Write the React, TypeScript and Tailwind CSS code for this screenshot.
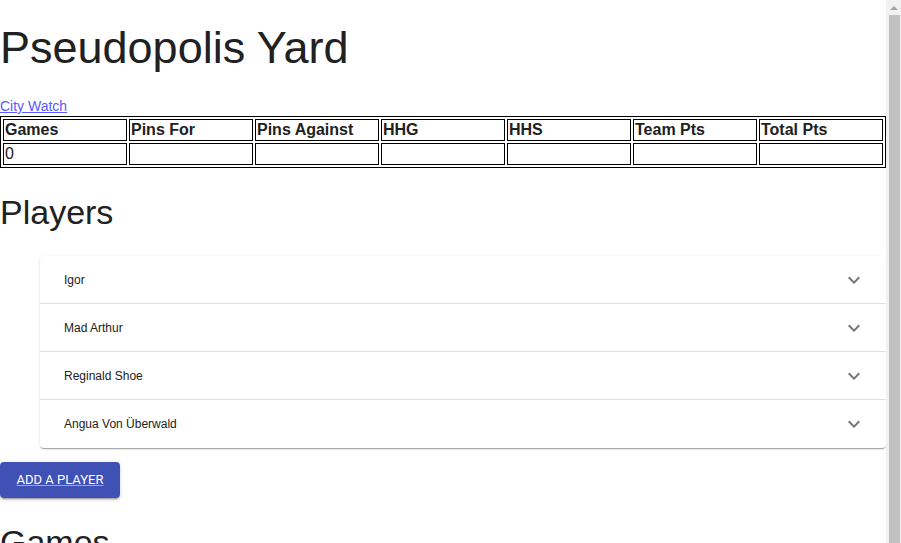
import React from "react";

const columns = ["Games", "Pins For", "Pins Against", "HHG", "HHS", "Team Pts", "Total Pts"];
const values = ["0", "", "", "", "", "", ""];
const players = ["Igor", "Mad Arthur", "Reginald Shoe", "Angua Von Überwald"];

const ExpandMore = () => (
  <svg viewBox="0 0 24 24" width="24" height="24" className="fill-[rgba(0,0,0,0.54)]">
    <path d="M16.59 8.59L12 13.17 7.41 8.59 6 10l6 6 6-6z" />
  </svg>
);

// static stand-in for the browser's vertical scrollbar
const Scrollbar = () => (
  <div className="flex w-[15px] shrink-0 flex-col items-center bg-[#f1f1f1]">
    <div className="flex h-[15px] w-full items-center justify-center">
      <div className="h-0 w-0 border-x-[4px] border-b-[4px] border-x-transparent border-b-[#a3a3a3]" />
    </div>
    <div className="w-[11px] flex-1 bg-[#c1c1c1] ml-[1px]" />
  </div>
);

const App = () => {
  return (
    <div className="flex h-[543px] overflow-hidden bg-white text-[#212121] font-['Liberation_Sans',Arial,sans-serif]">
      <div className="min-w-0 flex-1">
        <h1 className="mt-[22px] text-[45px] leading-[52px] font-normal">Pseudopolis Yard</h1>

        <div className="mt-[24px] text-[14px] leading-[16px]">
          <a href="#" className="text-[#5a5aff] underline">
            City Watch
          </a>
        </div>

        <table className="mt-[2px] w-full table-fixed border border-black border-separate border-spacing-[2px]">
          <thead>
            <tr>
              {columns.map((c) => (
                <th key={c} className="border border-black p-px text-left text-[16px] leading-[18px] font-bold">
                  {c}
                </th>
              ))}
            </tr>
          </thead>
          <tbody>
            <tr>
              {values.map((v, i) => (
                <td key={i} className="border border-black p-px text-[16px] leading-[18px] h-[22px]">
                  {v}
                </td>
              ))}
            </tr>
          </tbody>
        </table>

        <h2 className="mt-[24px] text-[34px] leading-[40px] font-normal">Players</h2>

        <div className="mt-[24px] ml-10 bg-white rounded-[4px] shadow-[0px_2px_1px_-1px_rgba(0,0,0,0.2),0px_1px_1px_0px_rgba(0,0,0,0.14),0px_1px_3px_0px_rgba(0,0,0,0.12)]">
          {players.map((p, i) => (
            <div
              key={p}
              className={`flex h-12 items-center justify-between pl-6 pr-5 ${i < players.length - 1 ? "border-b border-[rgba(0,0,0,0.12)]" : ""}`}
            >
              <span className="text-[12px] text-[#212121]">{p}</span>
              <ExpandMore />
            </div>
          ))}
        </div>

        <button className="mt-[14px] flex h-9 w-[120px] items-center justify-center rounded-[4px] bg-[#3f51b5] text-white shadow-[0px_3px_1px_-2px_rgba(0,0,0,0.2),0px_2px_2px_0px_rgba(0,0,0,0.14),0px_1px_5px_0px_rgba(0,0,0,0.12)]">
          <a href="#" className="font-['Roboto',Arial,sans-serif] text-[13px] uppercase underline decoration-[#9aa4e8] text-white">
            Add a player
          </a>
        </button>

        <h2 className="mt-[24px] text-[34px] leading-[40px] font-normal">Games</h2>
      </div>
      <Scrollbar />
    </div>
  );
};

export default App;
